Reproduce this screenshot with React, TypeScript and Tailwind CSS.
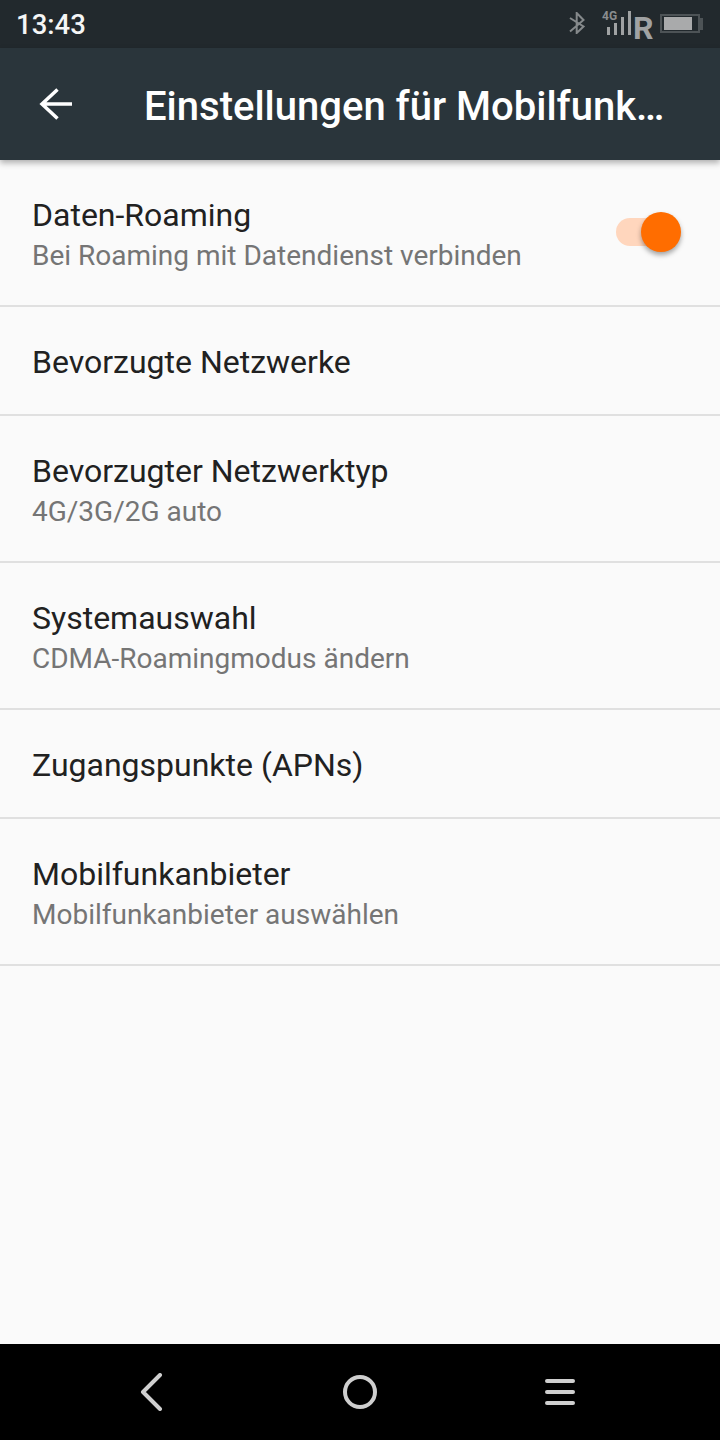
const rows: { title: string; sub?: string; toggle?: boolean }[] = [
  { title: "Daten-Roaming", sub: "Bei Roaming mit Datendienst verbinden", toggle: true },
  { title: "Bevorzugte Netzwerke" },
  { title: "Bevorzugter Netzwerktyp", sub: "4G/3G/2G auto" },
  { title: "Systemauswahl", sub: "CDMA-Roamingmodus ändern" },
  { title: "Zugangspunkte (APNs)" },
  { title: "Mobilfunkanbieter", sub: "Mobilfunkanbieter auswählen" },
];

function StatusIcons() {
  return (
    <div className="flex h-[48px] items-start">
      <svg width="16" height="22" viewBox="0 0 16 22" fill="none" stroke="#85898b" strokeWidth="2" className="mr-[17px] mt-[12px]">
        <path d="M1 6 L14.5 14.5 L7.7 21 V1 L14.5 8 L1 19.5" />
      </svg>
      <div className="relative h-[48px] w-[30px]">
        <span className="absolute left-0 top-[10px] text-[12px] leading-[12px] font-bold text-[#8a8d8f]">4G</span>
        <svg width="30" height="48" viewBox="0 0 30 48" fill="#a0a2a3" className="absolute left-0 top-0">
          <rect x="5" y="27" width="3" height="8" />
          <rect x="12" y="23" width="3" height="12" />
          <rect x="19" y="17" width="3" height="18" />
          <rect x="26" y="11" width="3" height="24" />
        </svg>
      </div>
      <span className="mt-[12px] w-[28px] pl-[1px] text-[32px] leading-[32px] font-bold text-[#a0a2a3]">R</span>
      <svg width="44" height="21" viewBox="0 0 44 21" fill="none" className="mt-[13px]">
        <rect x="1" y="2" width="38" height="17" stroke="#4d5356" strokeWidth="2" />
        <rect x="4" y="4" width="28" height="13" fill="#a9aaab" />
        <rect x="40" y="5" width="3" height="12" fill="#4d5356" />
      </svg>
    </div>
  );
}

function Toggle() {
  return (
    <div className="relative -mt-[1px] h-[28px] w-[65px]">
      <div className="absolute left-0 top-0 h-[28px] w-[56px] rounded-full bg-[#ffd6bd]" />
      <div className="absolute left-[25px] top-[-6px] h-[40px] w-[40px] rounded-full bg-[#ff6d00] shadow-[0_3px_5px_rgba(0,0,0,0.35)]" />
    </div>
  );
}

export default function App() {
  return (
    <div className="flex h-[1440px] w-[720px] flex-col overflow-hidden bg-[#fafafa] [font-family:Roboto,sans-serif]">
      <div className="flex h-[48px] shrink-0 items-center justify-between bg-[#22292d] pl-[16px] pr-[16px]">
        <span className="pt-[1px] text-[27.5px] font-medium text-[#f5f6f6]">13:43</span>
        <StatusIcons />
      </div>
      <div className="relative z-10 flex h-[112px] shrink-0 items-center bg-[#2a353b] shadow-[0_3px_6px_rgba(0,0,0,0.3)]">
        <svg width="36" height="36" viewBox="0 0 36 36" fill="none" stroke="#ffffff" strokeWidth="3.5" className="ml-[38px] mr-[70px]">
          <path d="M34 18 H4 M19.5 3.5 L4 18 L19.5 32.5" />
        </svg>
        <span className="pt-[5px] text-[40px] font-medium whitespace-nowrap text-white">Einstellungen für Mobilfunk…</span>
      </div>
      <div className="flex flex-1 flex-col">
        {rows.map((r) => (
          <div
            key={r.title}
            className={`flex items-center justify-between border-b-2 border-[#e0e0e0] pl-[32px] pr-[39px] ${r.sub ? "h-[147px]" : "h-[109px]"}`}
          >
            <div className={r.sub ? "pt-[6px]" : "pt-[4px]"}>
              <div className="text-[32px] leading-[41px] text-[#212121]">{r.title}</div>
              {r.sub && <div className="text-[28px] leading-[40px] text-[#757575]">{r.sub}</div>}
            </div>
            {r.toggle && <Toggle />}
          </div>
        ))}
      </div>
      <div className="flex h-[96px] shrink-0 items-center bg-black pl-[140px]">
        <svg width="24" height="38" viewBox="0 0 24 38" fill="none" stroke="#cfcfcf" strokeWidth="4" strokeLinecap="round" strokeLinejoin="round">
          <path d="M20 2 L3 19 L20 36" />
        </svg>
        <svg width="36" height="36" viewBox="0 0 36 36" fill="none" stroke="#cfcfcf" strokeWidth="4" className="ml-[178px]">
          <circle cx="18" cy="18" r="15" />
        </svg>
        <svg width="32" height="28" viewBox="0 0 32 28" fill="none" stroke="#cfcfcf" strokeWidth="4" strokeLinecap="round" className="ml-[166px]">
          <path d="M3 3 H29 M3 14 H29 M3 25 H29" />
        </svg>
      </div>
    </div>
  );
}
